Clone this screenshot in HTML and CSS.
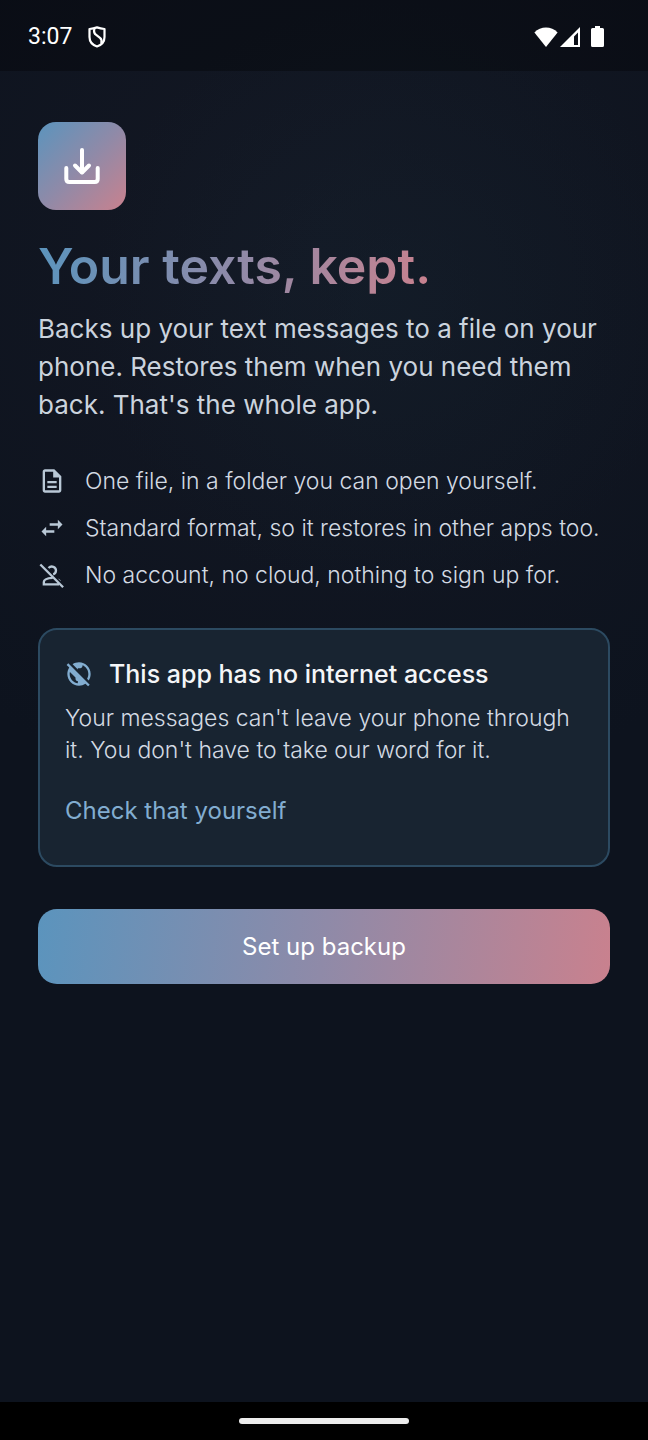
FILE: index.html
```html
<!DOCTYPE html>
<html lang="en">
<head>
  <meta charset="UTF-8" />
  <meta name="viewport" content="width=device-width, initial-scale=1.0"/>
  <title>Your texts, kept.</title>
  <link rel="stylesheet" href="styles.css">
</head>
<body>

  <!-- Status Bar -->
  <header class="status-bar">
    <span class="clock">3:07</span>
    <svg class="shield" viewBox="0 0 18 22" fill="none" stroke="#fff" stroke-width="2.2" stroke-linejoin="round">
      <path d="M9 1.4 C6.5 2.3 4 2.8 1.5 3 V11 C1.5 15.500 4.500 19 9 20.500 C13.500 19 16.500 15.500 16.500 11 V3 C14 2.800 11.500 2.300 9 1.400 Z"/>
      <path d="M6.500 2.500 C5.500 5.500 6 7.500 8.500 9.200 L12 11.800 C14 13.500 14 15 13.200 17.200"/>
    </svg>
    <div class="signals">
      <svg width="24" height="20" viewBox="0 0 24 20" fill="#fff"><path d="M12 20 L0.400 5.600 C6.500 -1.200 17.500 -1.200 23.600 5.600 Z"/></svg>
      <svg width="20" height="20" viewBox="0 0 20 20" fill="#fff"><path fill-rule="evenodd" d="M20 0 V20 H0 Z M18 5.500 L14 9.500 V18 H18 Z"/></svg>
      <svg class="battery" width="13" height="21" viewBox="0 0 13 21" fill="#fff"><path d="M4 0 H9 V2 H11.500 Q13 2 13 3.500 V19.500 Q13 21 11.500 21 H1.500 Q0 21 0 19.500 V3.500 Q0 2 1.500 2 H4 Z"/></svg>
    </div>
  </header>

  <main class="welcome">
    <div class="app-icon">
      <svg viewBox="0 0 36 36" fill="none" stroke="#fff" stroke-width="4" stroke-linecap="round" stroke-linejoin="round">
        <path d="M18 2 V24"/>
        <path d="M11 17.500 L18 24.500 L25 17.500"/>
        <path d="M2.300 20 V31 Q2.300 34 5.300 34 H30.700 Q33.700 34 33.700 31 V20"/>
      </svg>
    </div>

    <h1>Your texts, kept.</h1>
    <p class="intro">Backs up your text messages to a file on your phone. Restores them when you need them back. That's the whole app.</p>

    <!-- Feature List -->
    <ul class="features">
      <li>
        <svg viewBox="0 0 24 24"><path d="M8 16h8v2H8zm0-4h8v2H8zm6-10H6c-1.100 0-2 .9-2 2v16c0 1.100.89 2 1.990 2H18c1.100 0 2-.9 2-2V8l-6-6zm4 18H6V4h7v5h5v11z"/></svg>
        <span>One file, in a folder you can open yourself.</span>
      </li>
      <li>
        <svg viewBox="0 0 24 24"><path d="M6.990 11L3 15l3.990 4v-3H14v-2H6.990v-3zM21 9l-3.990-4v3H10v2h7.010v3L21 9z"/></svg>
        <span>Standard format, so it restores in other apps too.</span>
      </li>
      <li>
        <svg viewBox="0 0 24 24"><path fill="none" stroke="#b9c8d6" stroke-width="2" d="M2 3 L21.500 22.500 M9 6 C11.500 3.500 15.500 5 15.400 8.300 C15.300 10 14.500 11 13 11.400 M12.500 14.500 C8 14.800 5 16 5 18 V20 H18"/><path d="M17 15 C18.300 15.500 19.400 16.200 19.600 17.400 Z"/></svg>
        <span>No account, no cloud, nothing to sign up for.</span>
      </li>
    </ul>

    <!-- Privacy Card -->
    <section class="card">
      <h2>
        <svg viewBox="0 0 24 24"><path d="M11 8.170L6.490 3.660C8.070 2.610 9.960 2 12 2c5.520 0 10 4.480 10 10 0 2.040-.61 3.930-1.660 5.510l-1.460-1.460C19.590 14.860 20 13.480 20 12c0-3.350-2.070-6.220-5-7.410V5c0 1.100-.9 2-2 2h-2v1.170zm10.190 13.020l-1.410 1.410-2.270-2.270C15.930 21.390 14.040 22 12 22 6.480 22 2 17.520 2 12c0-2.040.61-3.930 1.660-5.510L1.390 4.220 2.800 2.810l18.390 18.380zM11 18c-1.100 0-2-.9-2-2v-1l-4.790-4.790C4.080 10.790 4 11.380 4 12c0 4.080 3.050 7.440 7 7.930V18z"/></svg>
        <span>This app has no internet access</span>
      </h2>
      <p>Your messages can't leave your phone through it. You don't have to take our word for it.</p>
      <button type="button" class="check">Check that yourself</button>
    </section>

    <button type="button" class="setup">Set up backup</button>
  </main>

  <footer class="nav-bar"><div class="handle"></div></footer>

</body>
</html>
```
FILE: styles.css
```css
* { box-sizing: border-box; margin: 0; padding: 0; }
body {
  min-height: 100vh;
  display: flex;
  flex-direction: column;
  font-family: Inter, sans-serif;
  font-weight: 300;
  color: #d3dae3;
  background:
    radial-gradient(circle at 60% 300px, rgba(18, 34, 46, 0.4), transparent 300px),
    radial-gradient(circle at 50% 260px, #141824, #0d131e 560px);
}
button { font: inherit; border: 0; background: none; cursor: pointer; }
svg { display: block; flex: none; }

/* Status bar */
.status-bar {
  height: 71px;
  padding: 2px 44px 0 28px;
  display: flex;
  align-items: center;
  background: rgba(0, 0, 0, 0.3);
}
.clock { font: 23px/28px Roboto, sans-serif; color: #fff; }
.shield { width: 18px; height: 22px; margin-left: 16px; }
.signals { display: flex; align-items: center; gap: 2px; margin-left: auto; }
.battery { margin-left: 9px; }

.welcome { flex: 1; padding: 51px 38px 40px; }
.app-icon {
  width: 88px;
  height: 88px;
  display: grid;
  place-items: center;
  border-radius: 18px;
  background: linear-gradient(135deg, #5b94bd, #8f8aa8 50%, #c9818e);
}
.app-icon svg { width: 36px; height: 36px; }

h1 {
  width: fit-content;
  margin-top: 26px;
  font-size: 50px;
  line-height: 60px;
  font-weight: 600;
  color: transparent;
  background: linear-gradient(100deg, #5b94bd, #8f8aa8 50%, #c9818e);
  background-clip: text;
  -webkit-background-clip: text;
}
.intro { margin-top: 14px; font-size: 26px; line-height: 38px; font-weight: 400; color: #cbd3dd; }

/* Features */
.features {
  list-style: none;
  margin-top: 43px;
  display: grid;
  gap: 19px;
  font-size: 23px;
  line-height: 28px;
}
.features li { display: flex; align-items: center; gap: 19px; }
.features svg { width: 28px; height: 28px; fill: #b9c8d6; }

/* Card */
.card {
  margin-top: 39px;
  padding: 28px 25px 31px;
  border: 2px solid #2c4a61;
  border-radius: 19px;
  background: #182431;
}
.card h2 {
  display: flex;
  align-items: center;
  gap: 16px;
  font-size: 25px;
  line-height: 32px;
  font-weight: 500;
  color: #f4f6f8;
}
.card h2 svg { width: 28px; height: 28px; fill: #82add0; }
.card p { margin-top: 12px; font-size: 23px; line-height: 32px; }
.check { margin-top: 20px; height: 48px; font-size: 24px; font-weight: 400; color: #82add0; }

.setup {
  width: 100%;
  height: 75px;
  margin-top: 42px;
  border-radius: 19px;
  font-size: 24px;
  font-weight: 400;
  color: #fff;
  background: linear-gradient(97deg, #5b94bd, #8f8aa8 50%, #c9818e);
}

/* Gesture bar */
.nav-bar { height: 38px; display: grid; place-items: center; background: #000; }
.handle { width: 170px; height: 6px; border-radius: 3px; background: #ececec; }
```
